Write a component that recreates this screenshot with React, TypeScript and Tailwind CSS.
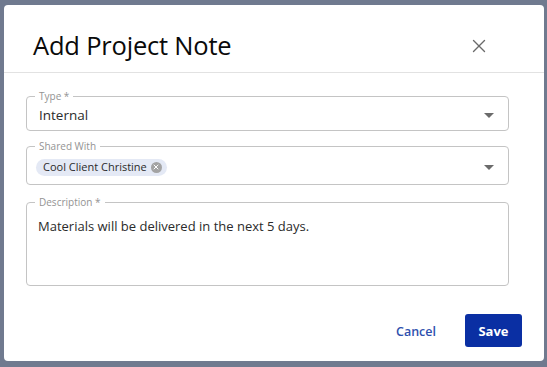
import { X } from "lucide-react";

const font = { fontFamily: '"Open Sans", "Noto Sans", sans-serif' };

function Caret() {
  return (
    <svg width="10" height="5" viewBox="0 0 10 5" className="shrink-0">
      <path d="M0 0h10L5 5z" fill="#6b6b6b" />
    </svg>
  );
}

function Field({ label, className, children }: { label: string; className?: string; children: React.ReactNode }) {
  return (
    <div className={"relative rounded-[4px] border border-[#c4c4c4] " + (className ?? "")}>
      <span className="absolute -top-[7px] left-[8px] bg-white px-[4px] text-[10px] leading-[12px] text-[#939393]">{label}</span>
      {children}
    </div>
  );
}

export default function App() {
  return (
    <div className="h-[367px] w-[547px] overflow-hidden bg-[#707a8f] pl-[4px] pt-[5px]" style={font}>
      <div className="flex h-[356px] w-[540px] flex-col rounded-[4px] bg-white">
        <div className="flex h-[68px] items-center justify-between border-b border-[#e2e2e2] pl-[29px] pr-[54px] pt-[14px]">
          <h1 className="text-[25.5px] font-normal leading-none tracking-[-0.2px] text-[#0a0a0a]">Add Project Note</h1>
          <X className="h-[22px] w-[22px] text-[#6a6a6a]" strokeWidth={1.5} />
        </div>

        <div className="ml-[22px] mr-[35px] mt-[23px] flex flex-col">
          <Field label="Type *" className="h-[35px]">
            <div className="flex h-full items-center justify-between pl-[12px] pr-[14px] pt-[3px]">
              <span className="text-[13.5px] text-[#2b2b2b]">Internal</span>
              <Caret />
            </div>
          </Field>

          <Field label="Shared With" className="mt-[15px] h-[39px]">
            <div className="flex h-full items-center justify-between pl-[9px] pr-[14px] pt-[3px]">
              <span className="flex h-[17px] items-center gap-[4px] rounded-full bg-[#e4e9f5] pl-[7px] pr-[5px] text-[11px] text-[#2b2b2b]">
                Cool Client Christine
                <span className="grid h-[11px] w-[11px] place-items-center rounded-full bg-[#a3a3a3]">
                  <X className="h-[8px] w-[8px] text-white" strokeWidth={3} />
                </span>
              </span>
              <Caret />
            </div>
          </Field>

          <Field label="Description *" className="mt-[17px] h-[84px]">
            <p className="pl-[11px] pt-[14px] text-[13px] text-[#2b2b2b]">Materials will be delivered in the next 5 days.</p>
          </Field>
        </div>

        <div className="mt-auto mb-[14px] mr-[22px] flex items-center justify-end gap-[29px]">
          <button className="pt-[4px] text-[12.5px] font-semibold text-[#2e4fae]">Cancel</button>
          <button className="h-[33px] w-[57px] rounded-[3px] bg-[#0a2fa3] pt-[2px] text-[13px] font-bold text-white">Save</button>
        </div>
      </div>
    </div>
  );
}
